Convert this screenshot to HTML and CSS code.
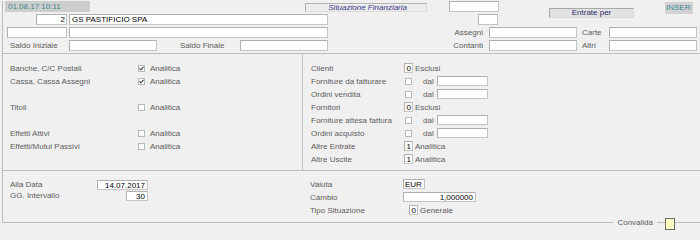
FILE: index.html
```html
<!DOCTYPE html>
<html lang="it">
<head>
<meta charset="utf-8">
<title>Situazione Finanziaria</title>
<link rel="stylesheet" href="styles.css">
</head>
<body>
<div class="frame">
  <div class="top">
    <div class="row rowA">
      <div class="datebox">01.08.17 10:11</div>
      <div class="titlebox">Situazione Finanziaria</div>
      <div class="inp wbox1"></div>
      <div class="entrate">Entrate per</div>
      <div class="inser">INSER</div>
    </div>
    <div class="row rowB">
      <div class="inp num in-code">2</div>
      <div class="inp val in-name">GS PASTIFICIO SPA</div>
      <div class="inp in-small"></div>
    </div>
    <div class="row rowC">
      <div class="inp in-left"></div>
      <div class="inp in-name"></div>
      <div class="lbl lbl-r">Assegni</div>
      <div class="inp in-amt"></div>
      <div class="lbl lbl-s">Carte</div>
      <div class="inp in-amt"></div>
    </div>
    <div class="row rowD">
      <div class="lbl lbl-si">Saldo Iniziale</div>
      <div class="inp in-amt"></div>
      <div class="lbl lbl-sf">Saldo Finale</div>
      <div class="inp in-amt"></div>
      <div class="lbl lbl-r">Contanti</div>
      <div class="inp in-amt"></div>
      <div class="lbl lbl-s">Altri</div>
      <div class="inp in-amt"></div>
    </div>
  </div>

  <div class="mid">
    <div class="col-left">
      <div class="r"><span class="ll">Banche, C/C Postali</span><span class="cb"><svg viewBox="0 0 5 5" width="5" height="5"><path d="M0.5 2.3 L1.9 3.8 L4.5 0.8" fill="none" stroke="#333" stroke-width="1.1"/></svg></span><span class="opt">Analitica</span></div>
      <div class="r"><span class="ll">Cassa, Cassa Assegni</span><span class="cb"><svg viewBox="0 0 5 5" width="5" height="5"><path d="M0.5 2.3 L1.9 3.8 L4.5 0.8" fill="none" stroke="#333" stroke-width="1.1"/></svg></span><span class="opt">Analitica</span></div>
      <div class="r"></div>
      <div class="r"><span class="ll">Titoli</span><span class="cb"></span><span class="opt">Analitica</span></div>
      <div class="r"></div>
      <div class="r"><span class="ll">Effetti Attivi</span><span class="cb"></span><span class="opt">Analitica</span></div>
      <div class="r"><span class="ll">Effetti/Mutui Passivi</span><span class="cb"></span><span class="opt">Analitica</span></div>
    </div>
    <div class="col-right">
      <div class="r"><span class="rl">Clienti</span><span class="inp num digit">0</span><span class="opt2">Esclusi</span></div>
      <div class="r"><span class="rl">Forniture da fatturare</span><span class="cb cb-r"></span><span class="dal">dal</span><span class="inp in-dal"></span></div>
      <div class="r"><span class="rl">Ordini vendita</span><span class="cb cb-r"></span><span class="dal">dal</span><span class="inp in-dal"></span></div>
      <div class="r"><span class="rl">Fornitori</span><span class="inp num digit">0</span><span class="opt2">Esclusi</span></div>
      <div class="r"><span class="rl">Forniture attesa fattura</span><span class="cb cb-r"></span><span class="dal">dal</span><span class="inp in-dal"></span></div>
      <div class="r"><span class="rl">Ordini acquisto</span><span class="cb cb-r"></span><span class="dal">dal</span><span class="inp in-dal"></span></div>
      <div class="r"><span class="rl">Altre Entrate</span><span class="inp num digit">1</span><span class="opt2">Analitica</span></div>
      <div class="r"><span class="rl">Altre Uscite</span><span class="inp num digit">1</span><span class="opt2">Analitica</span></div>
    </div>
  </div>

  <div class="bot">
    <div class="bcol-left">
      <div class="br"><span class="bl bl-1">Alla Data</span><span class="inp num in-date">14.07.2017</span></div>
      <div class="br"><span class="bl bl-2">GG. Intervallo</span><span class="inp num in-gg">30</span></div>
    </div>
    <div class="bcol-right">
      <div class="r"><span class="brl">Valuta</span><span class="inp val in-cur">EUR</span></div>
      <div class="r"><span class="brl">Cambio</span><span class="inp num in-rate">1,000000</span></div>
      <div class="r"><span class="brl">Tipo Situazione</span><span class="inp num digit digit-t">0</span><span class="opt2">Generale</span></div>
    </div>
  </div>
</div>
<div class="foot">
  <div class="fline grow"></div>
  <div class="conv">Convalida</div>
  <div class="fline short"></div>
  <div class="convbox"></div>
  <div class="fline tail"></div>
</div>
</body>
</html>
```

FILE: styles.css
```css
* { box-sizing: border-box; }
html, body { margin: 0; padding: 0; }
body {
  width: 700px;
  height: 236px;
  overflow: hidden;
  background: #f0f0f0;
  font-family: "Liberation Sans", Arial, sans-serif;
  font-size: 8px;
  color: #5c5c5c;
}

.frame {
  margin-top: 6px;
  margin-left: 2px;
  border-left: 1px solid #bdbdbd;
}

/* ---------- top group ---------- */
.top {
  height: 53px;
  border-bottom: 1px solid #bdbdbd;
}
.row { display: flex; align-items: flex-start; }
.rowA { margin-top: -5px; height: 13px; }
.rowB { height: 11px; }
.rowC { margin-top: 2px; height: 11px; }
.rowD { margin-top: 2px; height: 11px; }

.inp {
  display: block;
  height: 11px;
  background: #fff;
  border: 1px solid #c4c4c4;
  border-top-color: #b0b0b0;
  border-left-color: #b0b0b0;
  color: #000;
  line-height: 9px;
  white-space: nowrap;
  overflow: hidden;
  flex: none;
}
.num { text-align: right; padding-right: 1px; }
.val { padding-left: 2px; }

.datebox {
  margin-left: 2px;
  width: 85px;
  height: 11px;
  background: #cdcdcd;
  color: #3a8a8c;
  line-height: 11px;
  padding-left: 3px;
  flex: none;
}
.titlebox {
  margin-left: 215px;
  margin-top: 2px;
  width: 122px;
  height: 9px;
  background: #ececec;
  border: 1px solid #b4b4b4;
  border-right-color: #dcdcdc;
  border-bottom-color: #dcdcdc;
  color: #37378c;
  font-style: italic;
  line-height: 7px;
  text-align: right;
  padding-right: 19px;
  white-space: nowrap;
  flex: none;
}
.wbox1 { margin-left: 22px; width: 50px; }
.entrate {
  margin-left: 50px;
  margin-top: 7px;
  width: 85px;
  height: 10px;
  background: #e2e2e2;
  border: 1px solid #a8a8a8;
  border-right-color: #d8d8d8;
  border-bottom-color: #d8d8d8;
  color: #2e2e70;
  text-align: center;
  line-height: 8px;
  flex: none;
}
.inser {
  margin-left: 31px;
  margin-top: 1px;
  width: 28px;
  height: 12px;
  background: #d2d2d2;
  color: #3a8a8c;
  line-height: 12px;
  padding-left: 1px;
  flex: none;
}

.in-code { margin-left: 33px; width: 31px; }
.in-name { margin-left: 2px; width: 259px; }
.in-small { margin-left: 150px; width: 20px; }
.in-left { margin-left: 4px; width: 60px; }
.in-amt { width: 88px; }

.lbl { line-height: 11px; white-space: nowrap; flex: none; }
.lbl-r { width: 161px; text-align: right; padding-right: 6px; }
.lbl-s { width: 32px; padding-left: 5px; }
.lbl-si { margin-left: 7px; width: 59px; }
.lbl-sf { margin-left: 23px; width: 60px; }

/* ---------- middle group ---------- */
.mid {
  display: flex;
  height: 117px;
  border-bottom: 1px solid #bdbdbd;
}
.col-left {
  width: 300px;
  border-right: 1px solid #c4c4c4;
  padding-top: 8px;
}
.col-right {
  flex: 1;
  padding-top: 8px;
}
.r {
  display: flex;
  align-items: flex-start;
  height: 13px;
  line-height: 13px;
  white-space: nowrap;
}
.ll { width: 135px; padding-left: 7px; flex: none; }
.rl { width: 101px; padding-left: 8px; flex: none; }

.cb {
  display: flex;
  align-items: center;
  justify-content: center;
  width: 7px;
  height: 7px;
  margin-top: 3px;
  background: #fff;
  border: 1px solid #b8b8b8;
  flex: none;
}
.cb svg { display: block; }
.cb-r { margin-left: 1px; }
.opt { margin-left: 5px; }
.opt2 { margin-left: 2px; }
.dal { margin-left: 11px; width: 14px; flex: none; }
.in-dal { width: 51px; height: 10px; margin-top: 1px; }

.digit { width: 9px; height: 10px; margin-top: 1px; padding-right: 1px; }

/* ---------- bottom group ---------- */
.bot {
  display: flex;
  height: 51px;
}
.bcol-left { width: 300px; padding-top: 8px; }
.bcol-right { flex: 1; padding-top: 7px; }
.br {
  display: flex;
  align-items: flex-start;
  height: 11px;
  line-height: 11px;
  white-space: nowrap;
}
.bl { padding-left: 7px; flex: none; }
.bl-1 { width: 94px; }
.bl-2 { width: 123px; }
.in-date { width: 51px; height: 10px; margin-top: 1px; padding-right: 2px; }
.in-gg { width: 22px; height: 10px; margin-top: 1px; padding-right: 2px; }

.brl { width: 100px; padding-left: 7px; flex: none; }
.in-cur { width: 22px; height: 10px; margin-top: 1px; padding-left: 1px; }
.in-rate { width: 73px; height: 10px; margin-top: 1px; padding-right: 2px; }
.digit-t { margin-left: 6px; }

/* ---------- footer line ---------- */
.foot {
  display: flex;
  align-items: flex-start;
  margin-left: 2px;
  height: 9px;
}
.fline { height: 1px; border-top: 1px solid #bdbdbd; flex: none; }
.grow { flex: 1; }
.short { width: 8px; }
.tail { width: 25px; }
.conv {
  margin-top: -4px;
  line-height: 9px;
  padding: 0 4px;
  white-space: nowrap;
  flex: none;
}
.convbox {
  width: 10px;
  height: 12px;
  margin-top: -4px;
  background: #ffffc4;
  border: 1px solid #6a6a6a;
  flex: none;
}
```
